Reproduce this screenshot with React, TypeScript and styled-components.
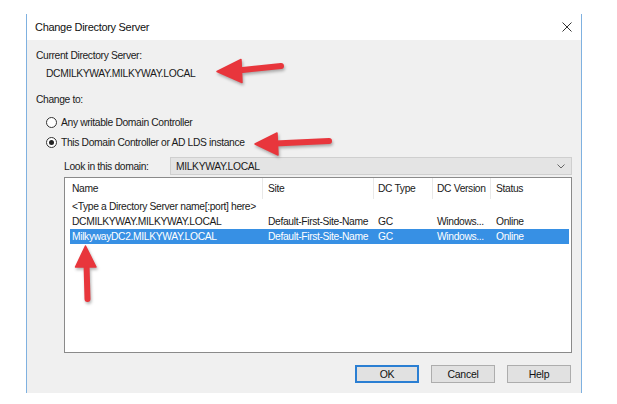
import styled, { createGlobalStyle } from 'styled-components'

const GlobalStyle = createGlobalStyle`
  body {
    margin: 0;
    background: #ffffff;
    font-family: "Liberation Sans", Arial, sans-serif;
    color: #1a1a1a;
  }
`

type Server = {
  name: string
  site: string
  type: string
  version: string
  status: string
  selected?: boolean
}

const columns = [
  { title: 'Name', width: 198, pad: 7 },
  { title: 'Site', width: 111, pad: 5 },
  { title: 'DC Type', width: 59, pad: 4 },
  { title: 'DC Version', width: 58, pad: 4 },
  { title: 'Status', width: 0, pad: 5 },
]

const servers: Server[] = [
  { name: '<Type a Directory Server name[:port] here>', site: '', type: '', version: '', status: '' },
  {
    name: 'DCMILKYWAY.MILKYWAY.LOCAL',
    site: 'Default-First-Site-Name',
    type: 'GC',
    version: 'Windows...',
    status: 'Online',
  },
  {
    name: 'MilkywayDC2.MILKYWAY.LOCAL',
    site: 'Default-First-Site-Name',
    type: 'GC',
    version: 'Windows...',
    status: 'Online',
    selected: true,
  },
]

const gridTemplate = columns.map(c => (c.width ? `${c.width}px` : '1fr')).join(' ')

const App = () => {
  return (
    <>
      <GlobalStyle />
      <Screen>
        <Dialog>
          <TitleBar>
            <Title>Change Directory Server</Title>
            <CloseIcon viewBox='0 0 10 10'>
              <path d='M0.5 0.5 L9.5 9.5 M9.5 0.5 L0.5 9.5' />
            </CloseIcon>
          </TitleBar>
          <Body>
            <Line>Current Directory Server:</Line>
            <Line $indent={10} $gap={3}>
              DCMILKYWAY.MILKYWAY.LOCAL
            </Line>
            <Line $gap={11}>Change to:</Line>
            <RadioRow $gap={8}>
              <RadioCircle />
              <span>Any writable Domain Controller</span>
            </RadioRow>
            <RadioRow $gap={5}>
              <RadioCircle $checked />
              <span>This Domain Controller or AD LDS instance</span>
            </RadioRow>
            <LookRow>
              <LookLabel>Look in this domain:</LookLabel>
              <Combo>
                <span>MILKYWAY.LOCAL</span>
                <Chevron viewBox='0 0 8 5'>
                  <path d='M0.5 0.5 L4 4 L7.5 0.5' />
                </Chevron>
              </Combo>
            </LookRow>
            <ListBox>
              <HeaderRow>
                {columns.map(c => (
                  <HeaderCell key={c.title} $pad={c.pad}>
                    {c.title}
                  </HeaderCell>
                ))}
              </HeaderRow>
              {servers.map(s => (
                <ServerRow key={s.name} $selected={s.selected}>
                  <Cell $pad={2}>{s.name}</Cell>
                  <Cell $pad={columns[1].pad}>{s.site}</Cell>
                  <Cell $pad={columns[2].pad}>{s.type}</Cell>
                  <Cell $pad={columns[3].pad}>{s.version}</Cell>
                  <Cell $pad={columns[4].pad}>{s.status}</Cell>
                </ServerRow>
              ))}
            </ListBox>
            <ButtonRow>
              <DialogButton $default>OK</DialogButton>
              <DialogButton>Cancel</DialogButton>
              <DialogButton>Help</DialogButton>
            </ButtonRow>
          </Body>
        </Dialog>
        <Arrows viewBox='0 0 617 404'>
          <g>
            <path d='M238 70.5 L281 66' />
            <polygon points='217,71.5 241,59.5 242,82.5' />
          </g>
          <g>
            <path d='M275 143.5 L329 141' />
            <polygon points='255,144 277,133 278,155' />
          </g>
          <g>
            <path d='M86.5 264 L87.5 299' />
            <polygon points='85.5,246 75.5,267 96,267' />
          </g>
        </Arrows>
      </Screen>
    </>
  )
}

export default App

const Screen = styled.div`
  position: relative;
  width: 617px;
  height: 404px;
  padding-top: 14px;
  box-sizing: border-box;
  overflow: hidden;
  font-size: 10.3px;
  letter-spacing: -0.35px;
`

const Dialog = styled.div`
  margin-left: 26px;
  width: 556px;
  height: 379px;
  box-sizing: border-box;
  border-left: 1px solid #7fb1e0;
  border-right: 1px solid #7fb1e0;
  display: flex;
  flex-direction: column;
`

const TitleBar = styled.div`
  height: 26px;
  flex-shrink: 0;
  background: #ffffff;
  display: flex;
  align-items: center;
  justify-content: space-between;
  padding: 0 9px 0 8px;
`

const Title = styled.span`
  font-size: 11px;
  letter-spacing: -0.3px;
  color: #111;
`

const CloseIcon = styled.svg`
  width: 10px;
  height: 10px;
  fill: none;
  stroke: #333;
  stroke-width: 1;
`

const Body = styled.div`
  flex: 1;
  background: #f0f0f0;
  padding: 8px 9px 0 9px;
`

const Line = styled.div<{ $indent?: number; $gap?: number }>`
  margin-left: ${p => p.$indent ?? 0}px;
  margin-top: ${p => p.$gap ?? 0}px;
  line-height: 15px;
  height: 15px;
`

const RadioRow = styled.div<{ $gap: number }>`
  display: flex;
  align-items: center;
  gap: 4px;
  height: 15px;
  margin-top: ${p => p.$gap}px;
  margin-left: 10px;
`

const RadioCircle = styled.span<{ $checked?: boolean }>`
  width: 11px;
  height: 11px;
  box-sizing: border-box;
  border: 1px solid #333;
  border-radius: 50%;
  background: #fff;
  display: flex;
  align-items: center;
  justify-content: center;

  &::after {
    content: '';
    width: 5px;
    height: 5px;
    border-radius: 50%;
    background: ${p => (p.$checked ? '#222' : 'transparent')};
  }
`

const LookRow = styled.div`
  display: flex;
  align-items: center;
  margin: 7px 0 0 28px;
  height: 18px;
`

const LookLabel = styled.span`
  width: 106px;
  flex-shrink: 0;
`

const Combo = styled.div`
  flex: 1;
  height: 18px;
  box-sizing: border-box;
  background: #e4e4e4;
  border: 1px solid #cfcfcf;
  display: flex;
  align-items: center;
  justify-content: space-between;
  padding: 0 6px 0 5px;
`

const Chevron = styled.svg`
  width: 8px;
  height: 5px;
  fill: none;
  stroke: #666;
  stroke-width: 1;
`

const ListBox = styled.div`
  margin: 2px 0 0 28px;
  height: 176px;
  box-sizing: border-box;
  background: #ffffff;
  border: 1px solid #8a8a8a;
`

const HeaderRow = styled.div`
  display: grid;
  grid-template-columns: ${gridTemplate};
  height: 21px;
`

const HeaderCell = styled.div<{ $pad: number }>`
  padding-left: ${p => p.$pad}px;
  line-height: 21px;
  border-right: 1px solid #e8e8e8;
  white-space: nowrap;

  &:last-child {
    border-right: none;
  }
`

const ServerRow = styled.div<{ $selected?: boolean }>`
  display: grid;
  grid-template-columns: ${columns[0].width - 5}px ${columns
      .slice(1)
      .map(c => (c.width ? `${c.width}px` : '1fr'))
      .join(' ')};
  margin: 0 2px 0 5px;
  height: 15px;
  line-height: 15px;
  background: ${p => (p.$selected ? '#3790e4' : 'transparent')};
  color: ${p => (p.$selected ? '#ffffff' : '#1a1a1a')};
`

const Cell = styled.div<{ $pad: number }>`
  padding-left: ${p => p.$pad}px;
  white-space: nowrap;
  overflow: visible;
`

const ButtonRow = styled.div`
  display: flex;
  justify-content: flex-end;
  gap: 12px;
  margin-top: 12px;
  padding-right: 1px;
`

const DialogButton = styled.button<{ $default?: boolean }>`
  width: 64px;
  height: 18px;
  box-sizing: border-box;
  padding: 0;
  font-family: inherit;
  font-size: 10.5px;
  letter-spacing: -0.25px;
  color: #111;
  background: #e1e1e1;
  border: ${p => (p.$default ? '2px solid #2b7fd3' : '1px solid #adadad')};
`

const Arrows = styled.svg`
  position: absolute;
  left: 0;
  top: 0;
  width: 617px;
  height: 404px;
  pointer-events: none;
  filter: drop-shadow(1px 2px 1.5px rgba(0, 0, 0, 0.3));

  path {
    fill: none;
    stroke: #e8363c;
    stroke-width: 6;
    stroke-linecap: round;
  }

  polygon {
    fill: #e8363c;
    stroke: #e8363c;
    stroke-width: 1.5;
    stroke-linejoin: round;
  }
`
